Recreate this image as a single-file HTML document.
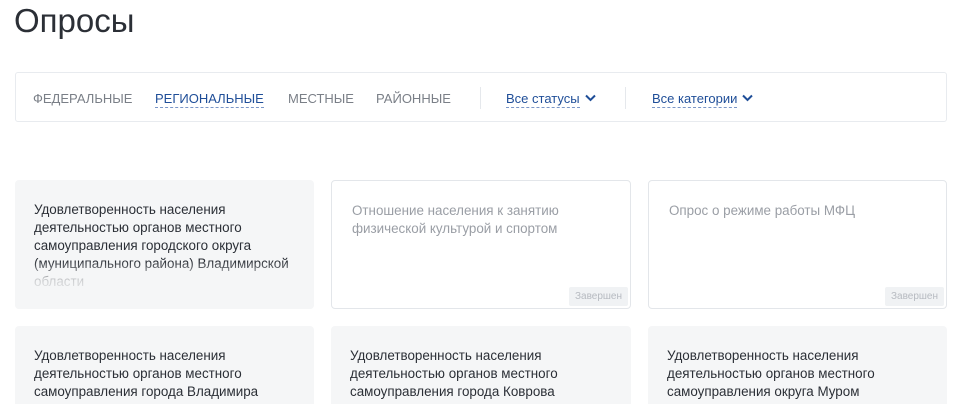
<!DOCTYPE html>
<html><head><meta charset="utf-8"><style>
html,body{margin:0;width:973px;height:404px;overflow:hidden;background:#fff;font-family:"Liberation Sans",sans-serif;position:relative}
.t{position:absolute;left:14px;top:2px;font-size:33px;color:#2b2f36;margin:0;font-weight:normal}
.f{position:absolute;left:15px;top:72px;width:932px;height:50px;border:1px solid #e8ebef;border-radius:3px;box-sizing:border-box}
.f span{position:absolute;top:18px;font-size:13px;color:#7a7f87}
.f .a{color:#1f4e98;border-bottom:1px dashed #7b97c8;padding-bottom:1px}
.f .d{color:#1f4e98;border-bottom:1px dashed #7b97c8;font-size:13px;padding-bottom:1px}
.sep{position:absolute;top:14px;width:1px;height:22px;background:#e5e8ec}
.c{position:absolute;width:299px;height:129px;box-sizing:border-box;border-radius:4px;overflow:hidden}
.g{background:#f5f6f7}
.w{background:#fff;border:1px solid #e3e6ea}
.c p{margin:0;position:absolute;left:19px;top:21px;width:270px;font-size:13.4px;line-height:18px;color:#2b2f36}
.w p{color:#9a9ea5;left:20px}
.b{position:absolute;right:2px;bottom:2px;background:#f0f2f4;color:#b6bac0;font-size:10px;padding:4px 6px;border-radius:2px}
.fade{position:absolute;left:0;right:0;bottom:0;height:48px;background:linear-gradient(rgba(245,246,247,0),rgba(245,246,247,.8) 40%,#f5f6f7 75%)}
</style></head><body>
<h1 class="t">Опросы</h1>
<div class="f">
<span style="left:17px">ФЕДЕРАЛЬНЫЕ</span>
<span class="a" style="left:139px">РЕГИОНАЛЬНЫЕ</span>
<span style="left:272px">МЕСТНЫЕ</span>
<span style="left:360px">РАЙОННЫЕ</span>
<div class="sep" style="left:464px"></div>
<span class="d" style="left:490px">Все статусы</span>
<svg style="position:absolute;left:569px;top:21px" width="11" height="8" viewBox="0 0 11 8"><path d="M1 1.5l4.5 4.5 4.5-4.5" fill="none" stroke="#1f4e98" stroke-width="2"/></svg>
<div class="sep" style="left:609px"></div>
<span class="d" style="left:636px">Все категории</span>
<svg style="position:absolute;left:726px;top:21px" width="11" height="8" viewBox="0 0 11 8"><path d="M1 1.5l4.5 4.5 4.5-4.5" fill="none" stroke="#1f4e98" stroke-width="2"/></svg>
</div>
<div class="c g" style="left:15px;top:180px"><p>Удовлетворенность населения деятельностью органов местного самоуправления городского округа (муниципального района) Владимирской области</p><div class="fade"></div></div>
<div class="c w" style="left:331px;top:180px;width:300px"><p>Отношение населения к занятию физической культурой и спортом</p><div class="b">Завершен</div></div>
<div class="c w" style="left:648px;top:180px"><p>Опрос о режиме работы МФЦ</p><div class="b">Завершен</div></div>
<div class="c g" style="left:15px;top:326px;height:78px;border-radius:4px 4px 0 0"><p>Удовлетворенность населения деятельностью органов местного самоуправления города Владимира</p></div>
<div class="c g" style="left:331px;top:326px;width:300px;height:78px;border-radius:4px 4px 0 0"><p>Удовлетворенность населения деятельностью органов местного самоуправления города Коврова</p></div>
<div class="c g" style="left:648px;top:326px;height:78px;border-radius:4px 4px 0 0"><p>Удовлетворенность населения деятельностью органов местного самоуправления округа Муром</p></div>
</body></html>
